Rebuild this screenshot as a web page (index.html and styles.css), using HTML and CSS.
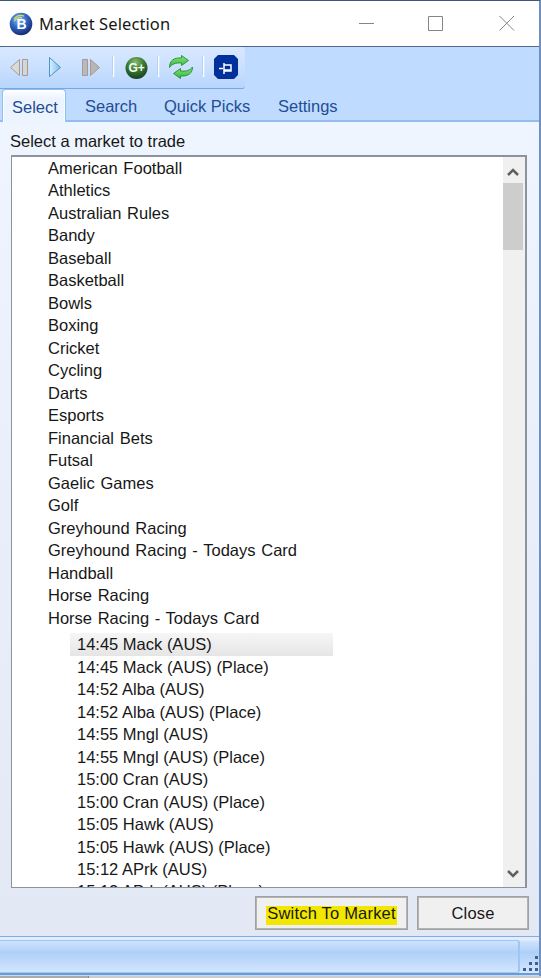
FILE: index.html
```html
<!DOCTYPE html>
<html lang="en">
<head>
<meta charset="utf-8">
<title>Market Selection</title>
<link rel="stylesheet" href="styles.css">
</head>
<body>
<div class="window">
  <header class="titlebar">
    <svg class="logo" width="24" height="24" viewBox="0 0 24 24"><defs><radialGradient id="ball" cx=".4" cy=".3" r=".7"><stop offset="0" stop-color="#8bbcf5"/><stop offset=".5" stop-color="#3268c8"/><stop offset="1" stop-color="#152d70"/></radialGradient></defs><circle cx="12" cy="12" r="11.3" fill="url(#ball)"/><path d="M5 7Q9 2 15 4M5 9Q10 4 13 6" fill="none" stroke="#d6dc62" stroke-width="1.2"/><text x="12.5" y="17" text-anchor="middle" class="logo-letter">B</text></svg>
    <h1>Market Selection</h1>
    <svg class="controls" width="156" height="16" viewBox="0 0 156 16" fill="none" stroke="#858585"><path d="M0 7.500H15M69.500 .5H83.500V14.500H69.500ZM140.500 0L155 14.500M155 0L140.500 14.500"/></svg>
  </header>
  <div class="toolbar">
    <svg width="244" height="41" viewBox="0 0 244 41">
      <defs>
        <linearGradient id="gray" x2="1"><stop stop-color="#dedbd9"/><stop offset="1" stop-color="#b7b2af"/></linearGradient>
        <linearGradient id="play" x2="1"><stop stop-color="#d9f0ff"/><stop offset="1" stop-color="#79bdf0"/></linearGradient>
        <radialGradient id="green" cx=".45" cy=".25" r=".75"><stop stop-color="#8dbb72"/><stop offset=".5" stop-color="#397b35"/><stop offset="1" stop-color="#173f20"/></radialGradient>
        <linearGradient id="leaf" x2="0" y2="1"><stop stop-color="#8be276"/><stop offset="1" stop-color="#36b641"/></linearGradient>
      </defs>
      <g fill="url(#gray)" stroke="#a29b98"><path d="M19.500 12.500V28.500L10.500 20.500ZM22.500 12.500H27.500V28.500H22.500ZM82.500 12.500H87.500V28.500H82.500ZM90.500 12.500V28.500L99.500 20.500Z"/></g>
      <path d="M49.500 10.500V29.500L60.500 20.500Z" fill="url(#play)" stroke="#4f91cc"/>
      <g stroke-width="1"><path d="M112.500 9V29M157.500 9V29M202.500 9V29" stroke="#9fc5f1"/><path d="M113.500 9V30M158.500 9V30M203.500 9V30" stroke="#fff" stroke-width="1.500"/></g>
      <circle cx="136.500" cy="21" r="11" fill="url(#green)"/><text x="136.700" y="25" text-anchor="middle" class="plus-label">G+</text>
      <path d="M169.500 20.500C169.500 13.500 174 10.500 181.500 11V8.500L188.500 13.500L181.500 18.500V16C175.500 15.500 172 17 169.500 20.500Z" fill="url(#leaf)" stroke="#279839" stroke-linejoin="round"/>
      <path d="M192.500 20C192.500 26.500 188 29.500 180.500 29V31.500L173.500 26.500L180.500 21.500V24C186.500 24.500 190 23.500 192.500 20Z" fill="url(#leaf)" stroke="#279839" stroke-linejoin="round"/>
      <path d="M218 8H234L238 12V28L234 32H218L214 28V12Z" fill="#00309b"/><path d="M219 21.500H223M224 16V27M224 18H231V24H224M224 23H231" fill="none" stroke="#fff" stroke-width="1.500"/>
    </svg>
  </div>
  <nav class="tabs"><a class="tab active">Select</a><a class="tab">Search</a><a class="tab quick">Quick Picks</a><a class="tab">Settings</a></nav>
  <main class="page">
    <p class="caption">Select a market to trade</p>
    <section class="listbox">
      <div class="viewport">
        <ul class="sports"><li>American Football</li><li>Athletics</li><li>Australian Rules</li><li>Bandy</li><li>Baseball</li><li>Basketball</li><li>Bowls</li><li>Boxing</li><li>Cricket</li><li>Cycling</li><li>Darts</li><li>Esports</li><li>Financial Bets</li><li>Futsal</li><li>Gaelic Games</li><li>Golf</li><li>Greyhound Racing</li><li>Greyhound Racing - Todays Card</li><li>Handball</li><li>Horse Racing</li><li>Horse Racing - Todays Card</li></ul>
        <ul class="races"><li class="selected">14:45 Mack (AUS)</li><li>14:45 Mack (AUS) (Place)</li><li>14:52 Alba (AUS)</li><li>14:52 Alba (AUS) (Place)</li><li>14:55 Mngl (AUS)</li><li>14:55 Mngl (AUS) (Place)</li><li>15:00 Cran (AUS)</li><li>15:00 Cran (AUS) (Place)</li><li>15:05 Hawk (AUS)</li><li>15:05 Hawk (AUS) (Place)</li><li>15:12 APrk (AUS)</li><li>15:12 APrk (AUS) (Place)</li></ul>
      </div>
      <div class="scrollbar">
        <svg width="20" height="26" viewBox="0 0 20 26"><path d="M5 18L10 13L15 18" fill="none" stroke="#606060" stroke-width="2.500"/></svg>
        <div class="thumb"></div>
        <svg class="down" width="20" height="26" viewBox="0 0 20 26"><path d="M5 10L10 15L15 10" fill="none" stroke="#606060" stroke-width="2.500"/></svg>
      </div>
    </section>
    <div class="actions"><button class="switch"><span>Switch To Market</span></button><button class="close">Close</button></div>
  </main>
  <footer class="status"><div class="status-panel"></div><svg width="17" height="17" viewBox="0 0 17 17" fill="#405f91"><path d="M13 0h3v3h-3zM7 6h3v3H7zM13 6h3v3h-3zM1 12h3v3H1zM7 12h3v3H7zM13 12h3v3h-3z"/></svg></footer>
</div>
<div class="desktop"><i></i></div>
</body>
</html>
```
FILE: styles.css
```css
* { box-sizing: border-box; }
body { margin: 0; width: 541px; height: 978px; overflow: hidden; background: #ccc; font: 16.5px/22.5px "Liberation Sans", Arial, sans-serif; color: #171717; }
.window { width: 541px; height: 976px; border-top: 1px solid #3c5680; border-right: 2px solid #7190bd; background: #bfdbff; display: flex; flex-direction: column; }
.titlebar { height: 46px; background: #fff; border-bottom: 1px solid #50698c; display: flex; align-items: center; padding-left: 9px; flex: none; }
h1 { margin: 0 0 0 6px; font: 16.5px/24px "Noto Sans", sans-serif; width: 320px; letter-spacing: .1px; }
.logo-letter { font: bold 14px "Liberation Sans", sans-serif; fill: #fff; }
.controls { margin-left: 0; flex: none; }
.toolbar { width: 245px; height: 42px; background: linear-gradient(#d9e8ff, #cce1ff 45%, #b7d5fd); border-bottom: 1px solid #79a6df; border-radius: 2px 4px 3px 0; flex: none; }
.toolbar svg { display: block; }
.plus-label { font: bold 12px "Liberation Sans", sans-serif; fill: #f2fff0; }
.tabs { height: 33px; border-bottom: 2px solid #94bbed; display: flex; align-items: flex-end; padding-left: 2px; color: #234d93; flex: none; }
.tab { width: 90px; height: 31px; line-height: 35px; padding-left: 19px; white-space: nowrap; }
.tab.active { width: 64px; height: 33px; margin-bottom: -2px; padding-left: 9px; line-height: 35px; border: solid #8cc1ee; border-width: 1px 1px 0; border-radius: 4px 4px 0 0; background: linear-gradient(#fff, #edf4ff 25%, #ecf4ff); box-shadow: inset 1px 1px #fff, inset -1px 0 #fff; }
.tab.quick { width: 104px; padding-left: 8px; }
.tab:last-child { padding-left: 18px; }
.page { height: 814px; padding: 8px 12px 0 11px; background: linear-gradient(#eef5ff, #e2e9f5); flex: none; }
.caption { margin: 0 0 2px -1px; height: 23px; }
.listbox { width: 516px; height: 733px; border: 2px solid #8b949e; border-left-width: 1px; border-bottom-width: 1px; background: #fff; display: flex; justify-content: space-between; overflow: hidden; }
.viewport { width: 490px; overflow: hidden; }
ul { margin: 0; padding: 0; list-style: none; }
li { height: 22.5px; white-space: nowrap; }
.sports { padding-left: 36px; margin-top: -.4px; word-spacing: 1.1px; }
.races { margin: 4px 0 0 58px; }
.races li { width: 263px; padding-left: 7px; }
.races li:last-child { margin-top: -1px; }
.selected { background: linear-gradient(#f6f6f6, #e5e5e5); }
.scrollbar { width: 22px; padding-right: 2px; background: #f0f0f0; display: flex; flex-direction: column; }
.scrollbar svg { display: block; flex: none; }
.thumb { height: 67px; background: #cdcdcd; }
.down { margin-top: auto; }
.actions { display: flex; justify-content: flex-end; gap: 9px; margin: 8px -2px 0 0; }
button { height: 34px; padding: 0; border: 1px solid #a1a1a1; outline: 1px solid #b3b3b3; outline-offset: -2px; background: #f0f0f0; font: inherit; color: inherit; }
.switch { width: 153px; }
.switch span { letter-spacing: .2px; background: linear-gradient(transparent 18%, #f1e700 18%); padding: 2px 1px 3px; }
.close { width: 112px; letter-spacing: .2px; }
.status { height: 39px; border-top: 1px solid #83addf; border-bottom: 2px solid #6f9bd3; background: linear-gradient(#e0edff 0 8%, #cfe2fd 12%, #afd0f7 43%, #d5e6ff); display: flex; justify-content: space-between; align-items: flex-end; flex: none; }
.status-panel { width: 520px; height: 33px; border: 1px solid #9bc7fb; border-width: 1px 2px 1px 0; border-radius: 0 3px 3px 0; }
.desktop { height: 2px; background: #ccc; }
.desktop i { display: block; width: 89px; height: 2px; background: #aaa; border-right: 1px solid #888; }
```
